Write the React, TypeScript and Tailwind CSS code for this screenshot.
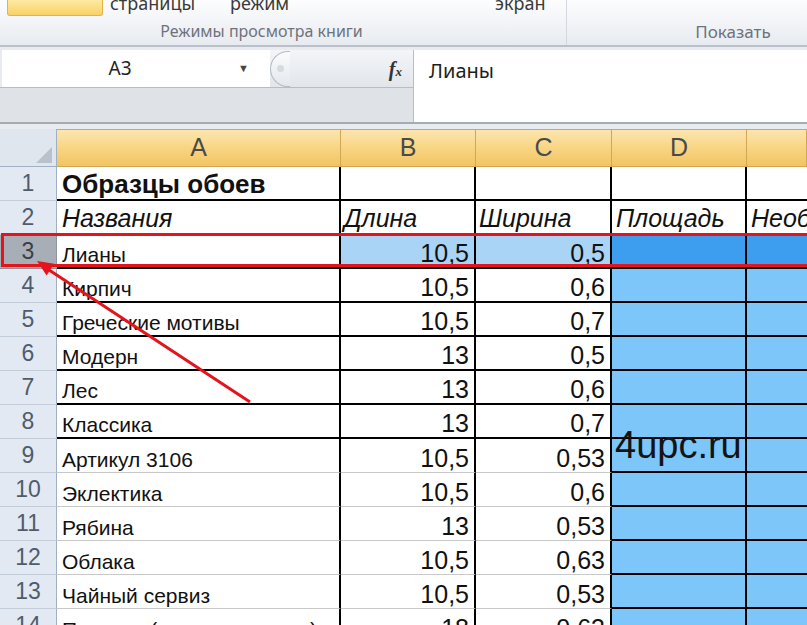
import React from "react";

type Row = {
  a?: string;
  b?: string;
  c?: string;
  d?: string;
  e?: string;
  kind?: "title" | "head" | "data";
};

const rows: Row[] = [
  { a: "Образцы обоев", kind: "title" },
  { a: "Названия", b: "Длина", c: "Ширина", d: "Площадь", e: "Необходимое", kind: "head" },
  { a: "Лианы", b: "10,5", c: "0,5" },
  { a: "Кирпич", b: "10,5", c: "0,6" },
  { a: "Греческие мотивы", b: "10,5", c: "0,7" },
  { a: "Модерн", b: "13", c: "0,5" },
  { a: "Лес", b: "13", c: "0,6" },
  { a: "Классика", b: "13", c: "0,7" },
  { a: "Артикул 3106", b: "10,5", c: "0,53" },
  { a: "Эклектика", b: "10,5", c: "0,6" },
  { a: "Рябина", b: "13", c: "0,53" },
  { a: "Облака", b: "10,5", c: "0,63" },
  { a: "Чайный сервиз", b: "10,5", c: "0,53" },
  { a: "Полоска (в ассортименте)", b: "18", c: "0,63" },
];

const cellFont = { fontFamily: '"Liberation Sans", Arial, sans-serif' };

const Ribbon = () => (
  <div className="flex h-[47px] border-b-2 border-[#b9c0c9] bg-gradient-to-b from-[#fdfdfe] to-[#e7ebf0] text-[#3a3a3a] font-['Noto_Sans',sans-serif]">
    <div className="flex w-[567px] shrink-0 flex-col border-r border-[#d3d8de]">
      <div className="flex h-[17px] items-start overflow-hidden">
        <div className="ml-[7px] h-[16px] w-[96px] shrink-0 rounded-b-[3px] border border-t-0 border-[#e0b446] bg-gradient-to-b from-[#fde9a2] to-[#f9d264]" />
        <span className="ml-[7px] -mt-[6px] w-[120px] shrink-0 text-[18px] leading-none">страницы</span>
        <span className="-mt-[6px] w-[265px] shrink-0 text-[18px] leading-none">режим</span>
        <span className="-mt-[6px] text-[18px] leading-none">экран</span>
      </div>
      <div className="mt-[6px] pr-[43px] text-center text-[16px] leading-none text-[#6d737d]">Режимы просмотра книги</div>
    </div>
    <div className="flex w-[332px] shrink-0 flex-col">
      <div className="h-[17px]" />
      <div className="mt-[6px] text-center text-[17px] leading-none text-[#6d737d]">Показать</div>
    </div>
  </div>
);

const FormulaBar = () => (
  <div className="mt-[3px] flex h-[74px] border-b-2 border-[#a3abb5] font-['Noto_Sans',sans-serif]">
    <div className="flex w-[413px] flex-col">
      <div className="flex h-[38px] border-b border-[#b6bdc6]">
        <div className="ml-[2px] flex w-[268px] items-center bg-white">
          <span className="w-[236px] text-center text-[19px] text-[#222]">A3</span>
          <span className="text-[11px] text-[#444]">▼</span>
        </div>
        <div className="flex flex-1 items-center bg-gradient-to-b from-[#f3f5f8] to-[#e2e6eb]">
          <div className="flex h-[36px] w-[20px] items-center justify-center rounded-l-[18px] border border-r-0 border-[#b4bbc4] bg-gradient-to-b from-[#fafbfc] to-[#e4e8ed]">
            <div className="h-[7px] w-[7px] rounded-full bg-[#d6dbe1]" />
          </div>
          <span className="ml-auto mr-[11px] font-['Liberation_Serif',serif] text-[20px] font-bold italic text-[#333]">
            f<span className="text-[13px]">x</span>
          </span>
        </div>
      </div>
      <div className="flex-1 bg-[#dfe3e8]" />
    </div>
    <div className="flex flex-1 border-l border-[#b6bdc6] bg-white pl-[15px] pt-[7px]">
      <span className="text-[20px] leading-[28px] text-[#1e1e1e]">Лианы</span>
    </div>
  </div>
);

const colHeads = ["A", "B", "C", "D", ""];

const Sheet = () => (
  <div className="mt-[5px] grid grid-cols-[57px_284px_135px_136px_135px_1fr]" style={cellFont}>
    <div className="relative h-[38px] border-r border-b border-[#9fb0c4] bg-[#dfe6ee]">
      <div className="absolute bottom-[3px] right-[4px] h-0 w-0 border-l-[16px] border-b-[16px] border-l-transparent border-b-[#b8c1cc]" />
    </div>
    {colHeads.map((h, i) => (
      <div
        key={i}
        className="flex h-[38px] items-center justify-center border-r border-b border-t border-[#d1a654] bg-gradient-to-b from-[#fce6ae] via-[#f8d583] to-[#f2c462] text-[25px] text-[#4a4a4a]"
      >
        {h}
      </div>
    ))}
    {rows.map((r, i) => {
      const n = i + 1;
      const light = n >= 9;
      const sel = n === 3;
      const blue = n >= 3;
      const abBottom = light ? "border-b border-b-[#c9c9c9]" : "border-b-2 border-b-black";
      const numCls = r.kind === "head" ? "justify-start pb-[2px] pl-[3px] text-[25px] italic" : "justify-end pb-[1px] pr-[5px] text-[25px]";
      return (
        <React.Fragment key={n}>
          <div
            className={`flex h-[34px] items-center justify-center border-r border-b text-[23px] ${
              sel ? "border-[#8e959d] bg-[#a8aeb5] text-[#3a3f46]" : "border-[#c3cdd9] border-r-[#9fb0c4] bg-[#e2e9f2] text-[#4f5c6c]"
            }`}
          >
            {n}
          </div>
          <div
            className={`flex h-[34px] items-end overflow-hidden whitespace-nowrap border-r-2 border-r-black bg-white pb-[2px] pl-[5px] leading-none text-[#111] ${abBottom} ${
              r.kind === "title" ? "text-[26px] font-bold" : r.kind === "head" ? "text-[25px] italic" : "text-[21px]"
            }`}
          >
            {r.a}
          </div>
          <div
            className={`flex h-[34px] items-end overflow-hidden whitespace-nowrap border-r-2 border-r-black leading-none text-[#111] ${abBottom} ${numCls} ${
              sel ? "bg-[#a9d4f5]" : "bg-white"
            }`}
          >
            {r.b}
          </div>
          <div
            className={`flex h-[34px] items-end overflow-hidden whitespace-nowrap border-r-2 border-r-black leading-none text-[#111] ${abBottom} ${numCls} ${
              sel ? "bg-[#a9d4f5]" : "bg-white"
            }`}
          >
            {r.c}
          </div>
          <div
            className={`flex h-[34px] items-end overflow-hidden whitespace-nowrap border-r-2 border-b-2 border-black pb-[2px] pl-[4px] text-[25px] leading-none italic text-[#111] ${
              sel ? "bg-[#3d9def]" : blue ? "bg-[#7cc6fa]" : "bg-white"
            }`}
          >
            {r.d}
          </div>
          <div
            className={`flex h-[34px] items-end overflow-hidden whitespace-nowrap border-b-2 border-black pb-[2px] pl-[4px] text-[25px] leading-none italic text-[#111] ${
              sel ? "bg-[#3d9def]" : blue ? "bg-[#7cc6fa]" : "bg-white"
            }`}
          >
            {r.e}
          </div>
        </React.Fragment>
      );
    })}
  </div>
);

export default function App() {
  return (
    <div className="relative h-[625px] w-[807px] overflow-hidden bg-[#e8ecf0]">
      <Ribbon />
      <FormulaBar />
      <Sheet />
      {/* selection markup drawn over the sheet */}
      <div className="pointer-events-none absolute left-[1px] top-[233px] h-[34px] w-[830px] border-[3px] border-[#e3141b]" />
      <svg className="pointer-events-none absolute left-0 top-0" width="807" height="625">
        <line x1="250" y1="402" x2="46" y2="268" stroke="#e3141b" strokeWidth="3" />
        <polygon points="37,261 46.6,275.6 54.2,263.8" fill="#e3141b" />
      </svg>
      <div
        className="pointer-events-none absolute left-[615px] top-[426px] text-[38px] leading-none text-[#141414]"
        style={cellFont}
      >
        4upc.ru
      </div>
    </div>
  );
}
